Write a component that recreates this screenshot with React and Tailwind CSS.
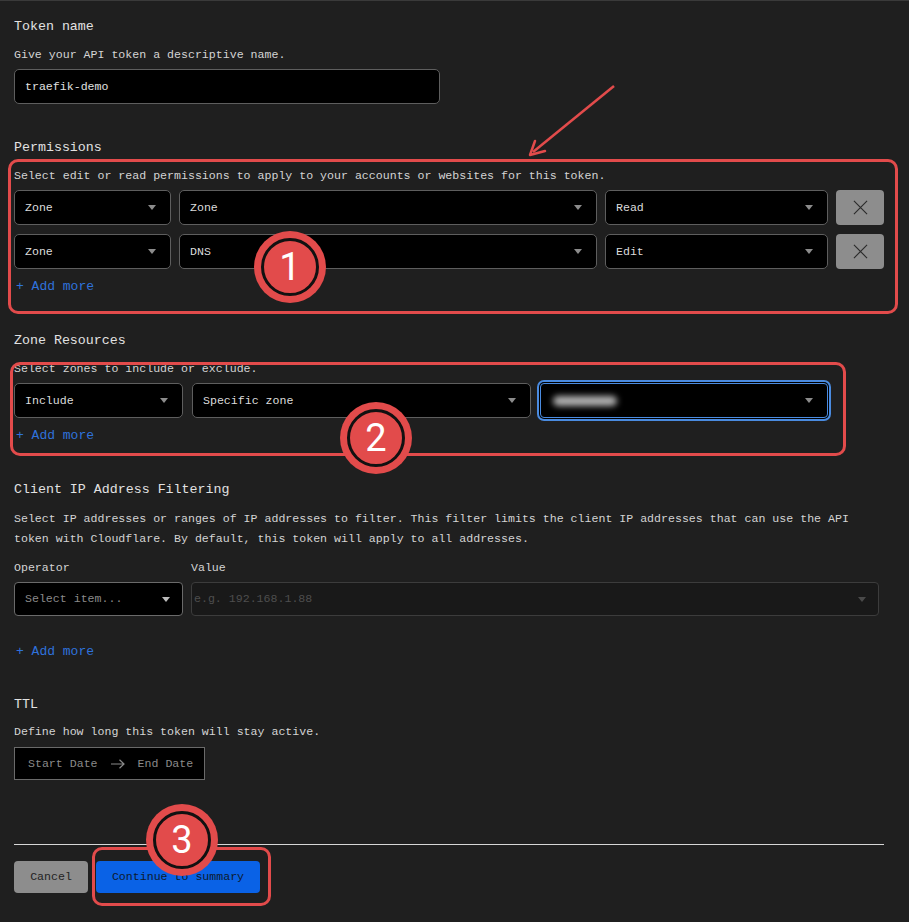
import React from 'react';

const mono = { fontFamily: '"Liberation Mono", "DejaVu Sans Mono", monospace' };

// small grey caret used in every dropdown
function Caret({ className = 'border-t-[#8c8c8c]' }) {
  return <span className={`block w-0 h-0 border-l-[4.5px] border-r-[4.5px] border-t-[5px] border-l-transparent border-r-transparent ${className}`} />;
}

function Select({ label, className = '' }) {
  return (
    <div className={`h-[35px] bg-black border border-[#5e5e5e] rounded-[5px] flex items-center justify-between pl-[10px] pr-[14px] ${className}`}>
      <span className="text-[#dcdcdc]">{label}</span>
      <Caret />
    </div>
  );
}

function RemoveButton() {
  return (
    <div className="h-[35px] bg-[#8d8d8d] rounded-[4px] flex items-center justify-center">
      <svg width="15" height="15" viewBox="0 0 16 16" stroke="#2a2a2a" strokeWidth="1.2" fill="none">
        <path d="M1 1 L15 15 M15 1 L1 15" />
      </svg>
    </div>
  );
}

function AddMore() {
  return (
    <div className="h-[20px] flex items-center text-[13px] text-[#2f72dc] pl-[2px]">+ Add more</div>
  );
}

// numbered red annotation marker
function Marker({ n, className }) {
  return (
    <div className={`absolute w-[72px] h-[72px] rounded-full bg-[#e24b4b] flex items-center justify-center ${className}`}>
      <div className="w-[58px] h-[58px] rounded-full border-[3px] border-[#111] bg-[#e24b4b] flex items-center justify-center">
        <span className="text-white text-[38px] leading-none" style={{ fontFamily: 'Roboto, "Liberation Sans", sans-serif' }}>{n}</span>
      </div>
    </div>
  );
}

export default function App() {
  return (
    <div className="relative min-h-screen w-[909px] h-[922px] bg-[#1f1f1f] border-t border-[#3a3a3a] pl-[14px] pr-[25px] text-[11.6px] text-[#d4d4d4]" style={mono}>
      {/* Token name */}
      <div className="pt-[16px] h-[36px] flex items-center text-[13.3px] text-[#e2e2e2]">Token name</div>
      <div className="mt-[8px] h-[20px] flex items-center">Give your API token a descriptive name.</div>
      <div className="mt-[4px] w-[426px] h-[35px] bg-black border border-[#5e5e5e] rounded-[5px] flex items-center pl-[10px] text-[#e0e0e0]">traefik-demo</div>

      {/* Permissions */}
      <div className="mt-[34px] h-[20px] flex items-center text-[13.3px] text-[#e2e2e2]">Permissions</div>
      <div className="mt-[8px] h-[20px] flex items-center">Select edit or read permissions to apply to your accounts or websites for this token.</div>
      <div className="mt-[4px] grid grid-cols-[157px_418px_223px_48px] gap-x-[8px] gap-y-[9px]">
        <Select label="Zone" />
        <Select label="Zone" />
        <Select label="Read" />
        <RemoveButton />
        <Select label="Zone" />
        <Select label="DNS" />
        <Select label="Edit" />
        <RemoveButton />
      </div>
      <div className="mt-[8px]"><AddMore /></div>

      {/* Zone Resources */}
      <div className="mt-[34px] h-[20px] flex items-center text-[13.3px] text-[#e2e2e2]">Zone Resources</div>
      <div className="mt-[8px] h-[20px] flex items-center">Select zones to include or exclude.</div>
      <div className="mt-[4px] flex">
        <Select label="Include" className="w-[169px]" />
        <Select label="Specific zone" className="w-[339px] ml-[9px]" />
        <div className="ml-[9px] w-[288px] h-[35px] bg-black border border-[#4a8be0] rounded-[4px] ring-2 ring-[#4a8be0] ring-offset-1 ring-offset-black flex items-center justify-between pl-[12px] pr-[14px]">
          <div className="w-[64px] h-[10px] rounded-full bg-white/70 blur-[3px]" />
          <Caret />
        </div>
      </div>
      <div className="mt-[8px]"><AddMore /></div>

      {/* Client IP Address Filtering */}
      <div className="mt-[34px] h-[20px] flex items-center text-[13.3px] text-[#e2e2e2]">Client IP Address Filtering</div>
      <div className="mt-[9px] leading-[20px] w-[860px]">
        Select IP addresses or ranges of IP addresses to filter. This filter limits the client IP addresses that can use the API token with Cloudflare. By default, this token will apply to all addresses.
      </div>
      <div className="mt-[9px] flex">
        <div className="w-[177px]">
          <div className="h-[20px] flex items-center">Operator</div>
          <div className="mt-[4px] w-[169px] h-[34px] bg-black border border-[#6a6a6a] rounded-[4px] flex items-center justify-between pl-[10px] pr-[12px]">
            <span className="text-[#8a8a8a]">Select item...</span>
            <Caret className="border-t-[#bcbcbc]" />
          </div>
        </div>
        <div className="w-[688px]">
          <div className="h-[20px] flex items-center">Value</div>
          <div className="mt-[4px] h-[34px] bg-[#191919] border border-[#3c3c3c] rounded-[4px] flex items-center justify-between pl-[2px] pr-[12px]">
            <span className="text-[#4e4e4e]">e.g. 192.168.1.88</span>
            <Caret className="border-t-[#4a4a4a]" />
          </div>
        </div>
      </div>
      <div className="mt-[26px]"><AddMore /></div>

      {/* TTL */}
      <div className="mt-[33px] h-[20px] flex items-center text-[13.3px] text-[#e2e2e2]">TTL</div>
      <div className="mt-[7px] h-[20px] flex items-center">Define how long this token will stay active.</div>
      <div className="mt-[5px] w-[191px] h-[33px] bg-black border border-[#6a6a6a] flex items-center pl-[13px] text-[#8a8a8a]">
        <span>Start Date</span>
        <svg className="mx-[13px]" width="14" height="10" viewBox="0 0 14 10" fill="none" stroke="#8a8a8a" strokeWidth="1.2">
          <path d="M0 5 H13 M8.5 0.8 L13 5 L8.5 9.2" />
        </svg>
        <span>End Date</span>
      </div>

      {/* Footer */}
      <div className="mt-[64px] h-px bg-[#d6d6d6]" />
      <div className="mt-[16px] flex gap-[8px]">
        <button className="h-[32px] w-[74px] bg-[#8d8d8d] rounded-[4px] text-[#232323] text-[11.6px]" style={mono}>Cancel</button>
        <button className="h-[32px] w-[164px] bg-[#0a62e6] rounded-[4px] text-[#0d1a2e] text-[11.6px]" style={mono}>Continue to summary</button>
      </div>

      {/* Annotations */}
      <div className="absolute left-[8px] top-[158px] w-[890px] h-[155px] border-[3px] border-[#e24b4b] rounded-[10px] pointer-events-none" />
      <div className="absolute left-[10px] top-[361px] w-[836px] h-[94px] border-[3px] border-[#e24b4b] rounded-[10px] pointer-events-none" />
      <div className="absolute left-[92px] top-[846px] w-[179px] h-[59px] border-[3px] border-[#e24b4b] rounded-[10px] pointer-events-none" />
      <svg className="absolute left-0 top-0 pointer-events-none" width="909" height="200">
        <path d="M614 85 L533 151" stroke="#e24b4b" strokeWidth="2.5" fill="none" />
        <path d="M530 154 L535 140 M530 154 L545 150" stroke="#e24b4b" strokeWidth="2.5" fill="none" strokeLinecap="round" />
      </svg>
      <Marker n="1" className="left-[254px] top-[230px]" />
      <Marker n="2" className="left-[340px] top-[401px]" />
      <Marker n="3" className="left-[146px] top-[803px]" />
    </div>
  );
}
